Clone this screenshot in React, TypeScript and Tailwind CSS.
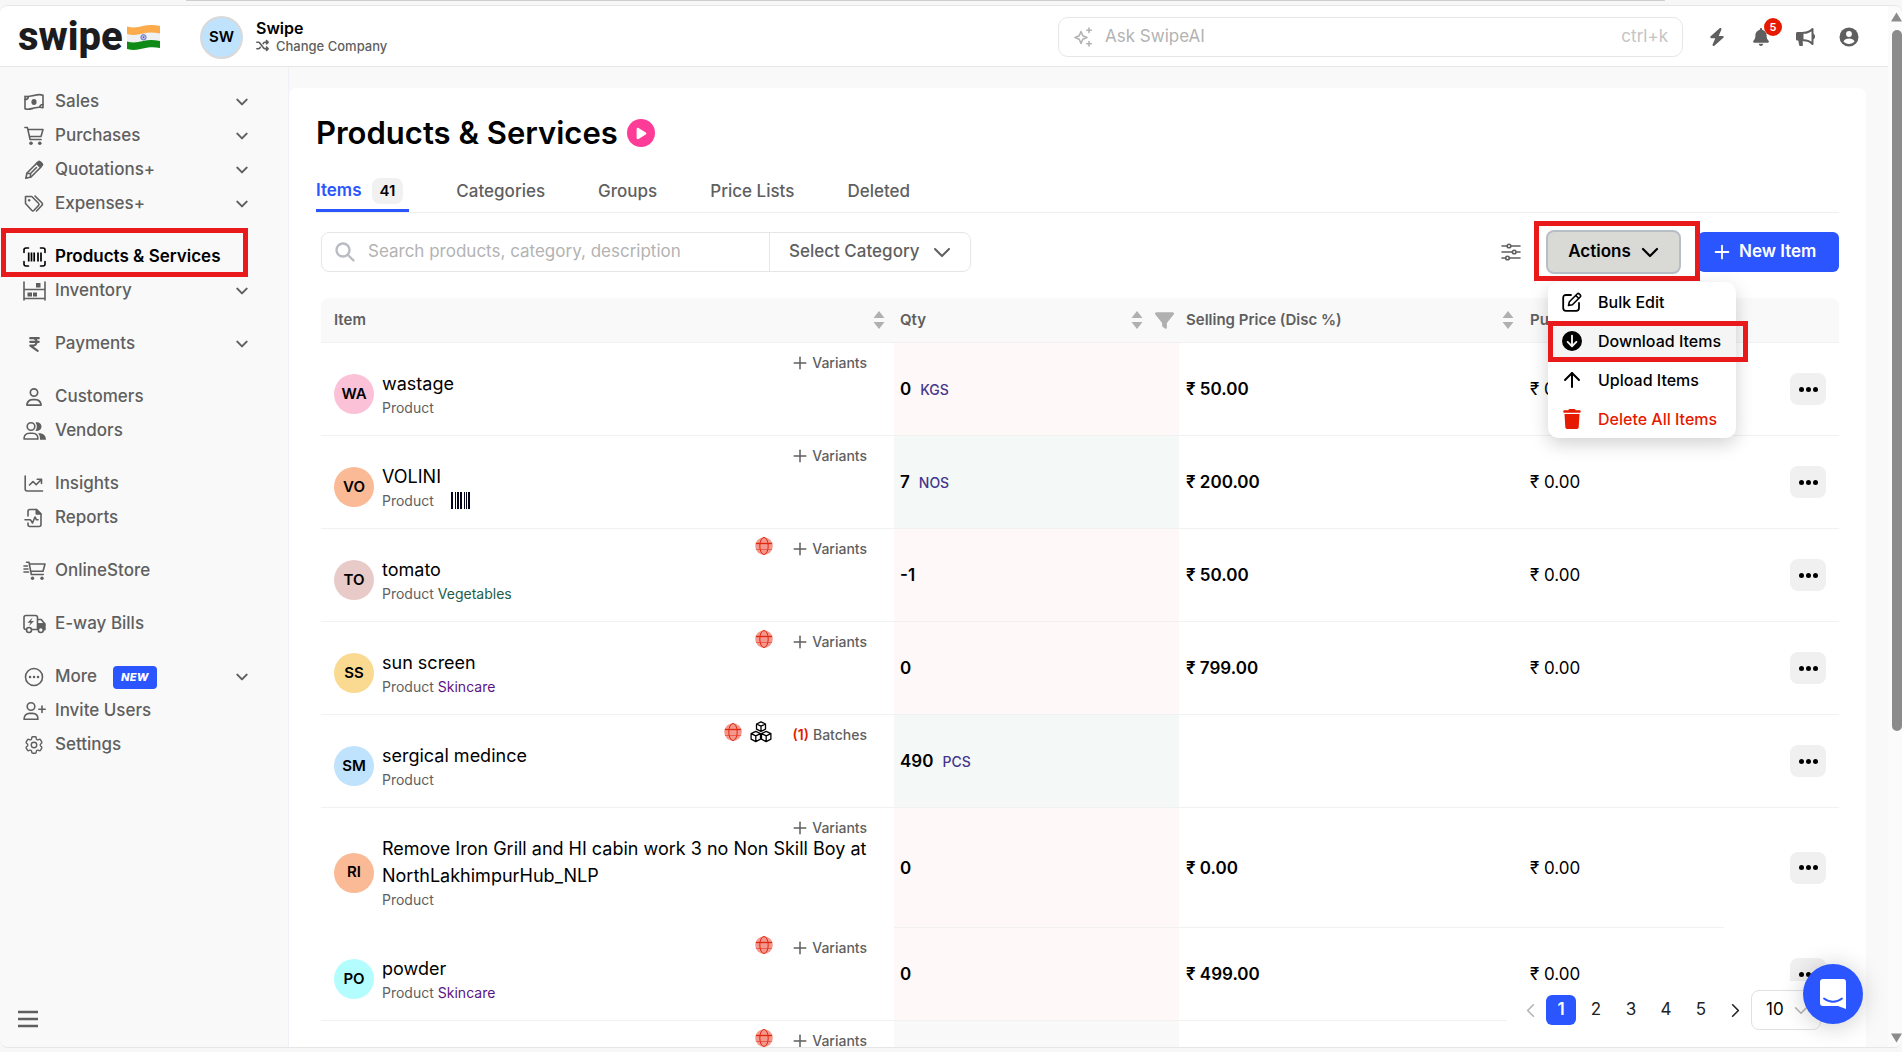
import React from "react";
import clsx from "clsx";
import { FaBolt, FaBell, FaFilter, FaTrash, FaRegUser, FaIndianRupeeSign, FaCircleArrowDown, FaPlay, FaShuffle } from "react-icons/fa6";
import { HiOutlineCog6Tooth } from "react-icons/hi2";
import { ArrowUp, Plus } from "lucide-react";

type IconProps = { className?: string };

const Svg = ({ children, className, w = 20 }: { children: React.ReactNode; className?: string; w?: number }) => (
  <svg
    viewBox={`0 0 ${w} 20`}
    className={className ?? "h-5 w-auto"}
    fill="none"
    stroke="currentColor"
    strokeWidth="1.6"
    strokeLinecap="round"
    strokeLinejoin="round"
    aria-hidden="true"
  >
    {children}
  </svg>
);

const CashIcon = () => (
  <Svg>
    <path d="M1 4.2c3 1.2 6-.1 9-.8 3-.8 6-1.4 9-.2v12.6c-3-1.2-6-.5-9 .3s-6 1.900-9 .7z" />
    <path d="M1 7.500c2 0 3.200-1.200 3.200-2.600M19 12.500c-2 0-3.200 1.200-3.200 2.800" />
    <ellipse cx="10" cy="10" rx="2.600" ry="3" fill="currentColor" stroke="none" />
  </Svg>
);
const CartIcon = () => (
  <Svg>
    <path d="M.9 1.500h2.500l2.700 12h11M4 3.500h15l-2 7H5.600" />
    <circle cx="7" cy="17.200" r="1.800" fill="currentColor" stroke="none" />
    <circle cx="15.800" cy="17.200" r="1.800" fill="currentColor" stroke="none" />
  </Svg>
);
const PencilIcon = () => (
  <Svg>
    <path d="M1.800 18.200l1.200-5.200L13 3l4 4L7 17z" />
    <path d="M12.500 3.500l2-2c1-1 4.800 2.500 3.800 3.800l-2 2z" fill="currentColor" />
    <path d="M6.500 13.500l6-6M3 13.500l3.500 0v3.500" />
  </Svg>
);
const TagsIcon = () => (
  <Svg>
    <path d="M1.500 2.500h6.300L14.500 9.200c.8.800.8 1.500 0 2.300l-4.500 4.800c-.8.800-1.500.8-2.300 0L1.500 9.500z" />
    <path d="M11 2l6.800 6.800c.9.900.9 1.800 0 2.700L12.500 17" />
    <circle cx="5.200" cy="6.200" r="1.200" fill="currentColor" stroke="none" />
  </Svg>
);
const BarcodeIcon = () => (
  <Svg w={23}>
    <path d="M1 5.500V3c0-1.200.8-2 2-2h2.500M17.500 1H20c1.200 0 2 .8 2 2v2.500M22 14.500V17c0 1.200-.8 2-2 2h-2.500M5.500 19H3c-1.200 0-2-.8-2-2v-2.500" />
    <path d="M5.700 5.500v9M8.500 5.500v9M11.200 5.500v9M15 5.500v9M18 5.500v9" strokeWidth="1.700" strokeLinecap="butt" />
  </Svg>
);
const InventoryIcon = () => (
  <Svg w={23}>
    <path d="M1 1v18M22 1v18M1 8.500h21M1 17.500h21" />
    <path d="M13 2h4.500v4.500H13zM4.500 11.500H9v4H4.500zM10 11.500h4v4h-4z" fill="currentColor" stroke="none" />
  </Svg>
);
const UsersIcon = () => (
  <Svg w={23}>
    <circle cx="8" cy="5.500" r="3.800" />
    <path d="M1 18c0-4 2.500-5.800 5.500-5.800h3c3 0 5.500 1.800 5.500 5.800z" />
    <path d="M12.500 9.800c1.800-2.600 1.800-5.800 0-8.300 3-1 6 1 6 4.100s-3 5.200-6 4.200zM15 12.300c5-.5 8 2.200 8 6.500h-6c.2-3-.4-5-2-6.500z" fill="currentColor" stroke="none" />
  </Svg>
);
const InsightsIcon = () => (
  <Svg>
    <path d="M1.200 2v13c0 1.200.8 2 2 2H18.500M5.500 11l3.500-3.500 3.200 3.200L17 5.800M13.200 5.200h4.300v4.300" />
  </Svg>
);
const ReportsIcon = () => (
  <Svg>
    <path d="M4 8V3.500c0-1.200.8-2 2-2h6.500L17 6v10.500c0 1.200-.8 2-2 2H6c-1.200 0-2-.8-2-2V15" />
    <path d="M12.300 1.500V6H17z" fill="currentColor" />
    <path d="M1 11.800h5.500l2 3.200 2.500-6 1.500 2.800H14" />
  </Svg>
);
const StoreIcon = () => (
  <Svg w={23}>
    <path d="M3.500 1.200H6l2.300 12.300h12M6.500 3H22l-2 7.200H8" />
    <path d="M1 5h3.500M1 8h4M1 11h4.500" />
    <circle cx="9.500" cy="17.300" r="1.700" fill="currentColor" stroke="none" />
    <circle cx="19" cy="17.300" r="1.700" fill="currentColor" stroke="none" />
  </Svg>
);
const TruckIcon = () => (
  <Svg w={23}>
    <path d="M3.500 15.500H3c-1.200 0-2-.8-2-2V3.500c0-1.200.8-2 2-2h9.500c1.200 0 2 .8 2 2v12H9" />
    <path d="M15 5.500h3.200L21.500 9.500v6.200M15 10h7" />
    <path d="M15 10h6.800v5.500H15z" fill="currentColor" />
    <circle cx="6" cy="16" r="2.500" fill="#f9f9f9" />
    <circle cx="17.800" cy="16" r="2.500" fill="#f9f9f9" />
    <path d="M9.500 3.500L4.500 8.700h3L6 12l5-5H8z" fill="currentColor" stroke="none" />
  </Svg>
);
const MoreIcon = () => (
  <Svg>
    <circle cx="10" cy="10" r="8.500" />
    <path d="M6 10h.1M10 10h.1M14 10h.1" strokeWidth="2.400" />
  </Svg>
);
const InviteIcon = () => (
  <Svg w={23}>
    <circle cx="8" cy="5.500" r="3.800" />
    <path d="M1 18.200c0-4 2.500-5.800 5.500-5.800h3c3 0 5.500 1.800 5.500 5.800zM19 5v6.500M15.800 8.200h6.400" />
  </Svg>
);
const MegaphoneIcon = ({ className }: IconProps) => (
  <Svg className={className}>
    <path d="M1 6.500C1 5.500 1.700 5 2.500 5h6v8.500H7.800V19H4.500c-.6-1.800-1-3.700-1.200-5.500H2.500C1.700 13.500 1 13 1 12z" fill="currentColor" stroke="none" />
    <path d="M8.500 5.800c4 0 6.800-1.300 9-3.800v15c-2.200-2.500-5-3.800-9-3.800" strokeWidth="2" />
    <path d="M18 7.500a2.200 2.200 0 0 1 0 4z" fill="currentColor" />
  </Svg>
);
const AccountIcon = ({ className }: IconProps) => (
  <svg viewBox="0 0 20 20" className={className} aria-hidden="true">
    <circle cx="10" cy="10" r="9.500" fill="currentColor" />
    <circle cx="10" cy="7" r="2.900" fill="#fff" />
    <path d="M4.500 14.500c1-2.300 3-3 5.500-3s4.500.7 5.500 3c-1.400 1.600-3.300 2.500-5.500 2.500s-4.100-.9-5.500-2.500z" fill="#fff" />
  </svg>
);
const SparkleIcon = ({ className }: IconProps) => (
  <Svg className={className}>
    <path d="M8 4.500L9.800 8.700 14 10.500 9.800 12.300 8 16.500 6.200 12.300 2 10.500 6.200 8.700z" />
    <path d="M16 1v4.500M13.800 3.200h4.500M16 14.500V19M13.800 16.800h4.500" />
  </Svg>
);
const SlidersIcon = () => (
  <Svg className="h-5 w-5">
    <path d="M1 4h5M10 4h9M1 10h10M15.500 10H19M1 16h3.500M8.500 16H19" />
    <circle cx="8" cy="4" r="1.800" />
    <circle cx="13.200" cy="10" r="1.800" />
    <circle cx="6.500" cy="16" r="1.800" />
  </Svg>
);
const EditIcon = () => (
  <Svg className="h-5 w-5">
    <path d="M9 3H4C2.300 3 1.200 4 1.200 5.700V16c0 1.700 1.100 2.800 2.800 2.800h10.200c1.700 0 2.800-1.100 2.800-2.800v-5" strokeWidth="1.800" />
    <path d="M6.500 13.500l.9-3.800 8-8c1-1 4.200 1.800 3 3l-8 8zM13.800 3.500l3 3" strokeWidth="1.600" />
  </Svg>
);
const GlobeIcon = () => (
  <svg viewBox="0 0 18 18" className="size-[18px]" fill="none" stroke="#e0280c" strokeWidth="1" aria-hidden="true">
    <circle cx="9" cy="9" r="8.800" fill="#f4988f" stroke="none" />
    <ellipse cx="9" cy="9" rx="4.200" ry="8.500" />
    <path d="M1 6.500h16" strokeWidth="1.300" />
    <path d="M1 12.500h16" strokeOpacity=".5" />
  </svg>
);
const CubesIcon = () => (
  <svg viewBox="0 0 22 22" className="size-[22px]" fill="none" stroke="#000" strokeWidth="1.300" strokeLinejoin="round" aria-hidden="true">
    <path d="M11 .8l4.500 2.200v5.200L11 10.400l-4.500-2.200V3zM6.500 3L11 5.200 15.500 3M11 5.200v5.200" />
    <path d="M5.800 10.400l4.700 2.200v5.600l-4.700 2.400-4.700-2.400v-5.600zM1.100 12.600l4.700 2.200 4.700-2.200M5.800 14.800v5.800" />
    <path d="M16.200 10.400l4.700 2.200v5.600l-4.700 2.400-4.700-2.400v-5.600zM11.500 12.600l4.700 2.200 4.700-2.200M16.200 14.800v5.800" />
  </svg>
);
const ItemBarcode = () => (
  <svg viewBox="0 0 19 16" className="h-[17px] w-[19px]" preserveAspectRatio="none" aria-hidden="true">
    <path d="M0 0h2v16H0zM4 0h1v16H4zM6 0h2v16H6zM9 0h2v16H9zM13 0h1v16h-1zM15 0h1v16h-1zM17 0h2v16h-2z" fill="#04041c" />
  </svg>
);
const ChevronIcon = ({ className, strokeWidth = 2 }: IconProps & { strokeWidth?: number }) => (
  <svg viewBox="0 0 18 11" className={className} fill="none" stroke="currentColor" strokeWidth={strokeWidth} strokeLinecap="round" strokeLinejoin="round" aria-hidden="true">
    <path d="M2 2l7 7 7-7" />
  </svg>
);
const IndiaFlag = () => (
  <svg viewBox="0 0 33 25" className="h-[25px] w-[33px] shrink-0" aria-hidden="true">
    <path d="M0 1.500C6 3 10 2.500 16 1s11-1.200 17 0v8c-6-1.200-11-1-17 0.500S6 11 0 9.500z" fill="#fbab4a" />
    <path d="M0 9c6 1.500 10 1 16-.5s11-1.200 17 0v7.500c-6-1.200-11-1-17 .5s-10 2-16 .5z" fill="#eef0f2" />
    <path d="M0 16.500c6 1.500 10 1 16-.5s11-1.200 17 0v7c-6-1.200-11-1-17 .5s-10 2-16 .5z" fill="#0f8a16" />
    <circle cx="16.500" cy="12.300" r="2.700" fill="#b9bde6" stroke="#5560c0" strokeWidth=".8" />
    <circle cx="16.500" cy="12.300" r=".8" fill="#3c49b4" />
  </svg>
);

interface NavItem {
  label: string;
  icon: React.ReactNode;
  more?: boolean;
  badge?: string;
  active?: boolean;
}

const navGroups: NavItem[][] = [
  [
    { label: "Sales", icon: <CashIcon />, more: true },
    { label: "Purchases", icon: <CartIcon />, more: true },
    { label: "Quotations+", icon: <PencilIcon />, more: true },
    { label: "Expenses+", icon: <TagsIcon />, more: true },
  ],
  [
    { label: "Products & Services", icon: <BarcodeIcon />, active: true },
    { label: "Inventory", icon: <InventoryIcon />, more: true },
  ],
  [{ label: "Payments", icon: <FaIndianRupeeSign size={17} />, more: true }],
  [
    { label: "Customers", icon: <FaRegUser size={18} /> },
    { label: "Vendors", icon: <UsersIcon /> },
  ],
  [
    { label: "Insights", icon: <InsightsIcon /> },
    { label: "Reports", icon: <ReportsIcon /> },
  ],
  [{ label: "OnlineStore", icon: <StoreIcon /> }],
  [{ label: "E-way Bills", icon: <TruckIcon /> }],
  [
    { label: "More", icon: <MoreIcon />, more: true, badge: "NEW" },
    { label: "Invite Users", icon: <InviteIcon /> },
    { label: "Settings", icon: <HiOutlineCog6Tooth size={22} /> },
  ],
];

interface Product {
  id: number;
  initials?: string;
  color?: string;
  name?: string;
  category?: string;
  categoryColor?: string;
  barcode?: boolean;
  online?: boolean;
  batches?: number;
  qty?: string;
  unit?: string;
  qtyColor: string;
  price?: string;
  purchase?: string;
  openEnd?: boolean;
}

const products: Product[] = [
  { id: 1, initials: "WA", color: "bg-[#fbc2d7]", name: "wastage", qty: "0", unit: "KGS", qtyColor: "bg-[#fef8f8]", price: "50.00", purchase: "0.00" },
  { id: 2, initials: "VO", color: "bg-[#fbba96]", name: "VOLINI", barcode: true, qty: "7", unit: "NOS", qtyColor: "bg-[#f4f9f8]", price: "200.00", purchase: "0.00" },
  { id: 3, initials: "TO", color: "bg-[#e8cbc8]", name: "tomato", category: "Vegetables", categoryColor: "text-[#1d5c46]", online: true, qty: "-1", qtyColor: "bg-[#fef8f8]", price: "50.00", purchase: "0.00" },
  { id: 4, initials: "SS", color: "bg-[#fad991]", name: "sun screen", category: "Skincare", categoryColor: "text-[#5b1382]", online: true, qty: "0", qtyColor: "bg-[#fef8f8]", price: "799.00", purchase: "0.00" },
  { id: 5, initials: "SM", color: "bg-[#bfe2fd]", name: "sergical medince", online: true, batches: 1, qty: "490", unit: "PCS", qtyColor: "bg-[#f4f9f8]" },
  { id: 6, initials: "RI", color: "bg-[#fbba96]", name: "Remove Iron Grill and HI cabin work 3 no Non Skill Boy at NorthLakhimpurHub_NLP", qty: "0", qtyColor: "bg-[#fef8f8]", price: "0.00", purchase: "0.00", openEnd: true },
  { id: 7, initials: "PO", color: "bg-[#b3fdfe]", name: "powder", category: "Skincare", categoryColor: "text-[#5b1382]", online: true, qty: "0", qtyColor: "bg-[#fef8f8]", price: "499.00", purchase: "0.00" },
  { id: 8, online: true, qtyColor: "bg-[#f9f9f9]" },
];

const SortIcon = () => (
  <svg viewBox="0 0 12 18" className="h-[18px] w-3" fill="#b0b0b0" aria-hidden="true">
    <path d="M6 0l5.500 7H.5zM6 18l5.500-7H.5z" />
  </svg>
);

const Header = () => (
  <header className="flex h-[61px] shrink-0 items-center border-b border-[#e6e6e6] bg-white pt-0.5 pr-[29px] pl-[18px]">
    <a href="#" className="flex w-[182px] items-center gap-[7px]">
      <span className="w-[102px] font-[Roboto] text-[40px] leading-9 font-extrabold text-[#1c1c1e]">swipe</span>
      <IndiaFlag />
    </a>
    <div className="flex flex-1 items-center gap-[13px]">
      <span className="flex size-[43px] items-center justify-center rounded-full border-2 border-[#d9d9d9] bg-[#bfe2fd] text-[15px] font-semibold">SW</span>
      <div className="pb-[3px]">
        <p className="text-base leading-5 font-semibold">Swipe</p>
        <button className="flex items-center gap-[7px] text-[13px] leading-4 font-medium text-[#5f5f5f]">
          <FaShuffle size={13} />
          Change Company
        </button>
      </div>
    </div>
    <label className="flex h-10 w-[625px] items-center gap-3 rounded-[10px] border border-[#e6e6e6] px-[14px] text-[#b3b3b3]">
      <SparkleIcon className="h-5 w-5" />
      <input type="text" aria-label="Ask SwipeAI" placeholder="Ask SwipeAI" className="min-w-0 flex-1 text-[17px] outline-none placeholder:text-[#b3b3b3]" />
      <span className="text-[17px] text-[#c4c4c4]">ctrl+k</span>
    </label>
    <div className="ml-6 flex items-center gap-6 text-[#5f5f5f]">
      <button aria-label="Quick actions" className="flex w-5 justify-center"><FaBolt size={18} /></button>
      <button aria-label="Notifications" className="relative flex w-5 justify-center">
        <FaBell size={18} />
        <span className="absolute -top-[10px] left-[13px] flex size-[18px] items-center justify-center rounded-full bg-[#e51a00] text-[11px] font-semibold text-white">5</span>
      </button>
      <button aria-label="Announcements"><MegaphoneIcon className="h-5 w-5" /></button>
      <button aria-label="Account"><AccountIcon className="h-5 w-5" /></button>
    </div>
  </header>
);

const Sidebar = () => (
  <nav className="flex w-[289px] shrink-0 flex-col justify-between border-r border-[#f0f0f6] pt-[18px] pb-[19px]">
    <div className="flex flex-col gap-[19px]">
      {navGroups.map((group) => (
        <ul key={group[0].label}>
          {group.map((item) => (
            <li key={item.label} className="relative">
              <a href="#" className={clsx("flex h-[34px] items-center pr-10 pl-[22px] text-[17px]", item.active ? "font-semibold text-black" : "font-medium text-[#5f5f5f]")}>
                <span className="mr-[9px] flex w-6 justify-center">{item.icon}</span>
                {item.label}
                {item.badge && <span className="ml-4 rounded-[4px] bg-[#2a55ff] px-2 text-[11px] leading-[23px] font-extrabold tracking-wide text-white italic">{item.badge}</span>}
                {item.more && <ChevronIcon className="ml-auto h-2 w-3" strokeWidth={3} />}
              </a>
              {item.active && <span className="pointer-events-none absolute -top-3 left-px h-[49px] w-[247px] border-5 border-[#e81a1c]" />}
            </li>
          ))}
        </ul>
      ))}
    </div>
    <button aria-label="Collapse menu" className="ml-[18px] w-5 text-[#5f5f5f]">
      <svg viewBox="0 0 20 18" className="h-[18px] w-5" fill="none" stroke="currentColor" strokeWidth="2.400" aria-hidden="true">
        <path d="M0 2h20M0 9h20M0 16h20" />
      </svg>
    </button>
  </nav>
);

const ActionsMenu = () => (
  <div className="absolute top-[52px] left-0.5 z-20 w-[188px] rounded-[10px] bg-white text-base font-medium shadow-[0_6px_18px_rgba(0,0,0,0.18)]">
    <button className="flex h-[39px] w-full items-center gap-4 pl-[14px]"><EditIcon />Bulk Edit</button>
    <div className="relative">
      <button className="flex h-[39px] w-full items-center gap-4 bg-[#f5f5f5] pl-[14px]"><FaCircleArrowDown size={20} />Download Items</button>
      <span className="pointer-events-none absolute top-0 left-0 h-[41px] w-[200px] border-5 border-[#e81a1c]" />
    </div>
    <button className="flex h-[39px] w-full items-center gap-4 pl-[14px]"><span className="flex w-5 justify-center"><ArrowUp size={24} className="shrink-0" /></span>Upload Items</button>
    <button className="flex h-[39px] w-full items-center gap-4 pl-[14px] text-[#e51a00]"><span className="flex w-5 justify-center"><FaTrash size={20} /></span>Delete All Items</button>
  </div>
);

const Toolbar = () => (
  <div className="mt-[19px] flex items-center justify-between pl-[5px]">
    <div className="flex h-10 w-[650px] items-center rounded-lg border border-[#e6e6e6] text-[17px]">
      <label className="flex h-full flex-1 items-center gap-[13px] border-r border-[#e6e6e6] pl-[13px]">
        <svg viewBox="0 0 20 20" className="h-5 w-5" fill="none" stroke="#b9bcc2" strokeWidth="2.400" strokeLinecap="round" aria-hidden="true">
          <circle cx="8" cy="8" r="6.500" />
          <path d="M13 13l5.500 5.500" />
        </svg>
        <input type="search" aria-label="Search" placeholder="Search products, category, description" className="min-w-0 flex-1 outline-none placeholder:text-[#b3b3b3]" />
      </label>
      <div className="relative flex h-full w-[200px] items-center">
        <select aria-label="Select Category" className="h-full w-full appearance-none pl-[19px] font-medium text-[#5f5f5f] outline-none">
          <option>Select Category</option>
        </select>
        <ChevronIcon className="pointer-events-none absolute right-[19px] h-[11px] w-[18px] text-[#5f5f5f]" />
      </div>
    </div>
    <div className="flex items-center">
      <button aria-label="Columns" className="mr-[25px] text-[#5f5f5f]"><SlidersIcon /></button>
      <div className="relative -my-1 mr-[17px]">
        <button className="flex h-11 w-[135px] items-center justify-center gap-[10px] rounded-lg border-2 border-[#b8bec6] bg-[#d9d9d6] text-[17px] font-semibold">
          Actions
          <ChevronIcon className="h-[11px] w-[18px]" strokeWidth={2.2} />
        </button>
        <span className="pointer-events-none absolute -top-[9px] -left-3 z-10 h-[60px] w-[166px] border-5 border-[#e81a1c]" />
        <ActionsMenu />
      </div>
      <button className="flex h-10 w-[141px] items-center gap-1.5 rounded-md bg-[#2a55ff] pl-[13px] text-[17px] font-semibold text-white">
        <Plus size={22} />
        New Item
      </button>
    </div>
  </div>
);

const ProductRow = ({ item }: { item: Product }) => {
  const line = "border-[#f1f1f1]";
  const openLine = item.openEnd ? "border-white" : line;
  return (
    <tr className="text-[17px] [&>td]:border-b">
      <td className={clsx("pt-3 pr-[27px] pb-[17px] pl-[13px]", openLine)}>
        <div className="flex h-[15px] items-center justify-end text-sm font-medium text-[#5f5f5f]">
          {item.online && <span className="mb-1.5 flex items-center gap-2"><GlobeIcon />{item.batches && <CubesIcon />}</span>}
          <button className={clsx("flex items-center", item.batches ? "ml-[21px] gap-1" : "ml-[17px] gap-0.5")}>
            {item.batches ? <span className="font-semibold text-[#e51a00]">({item.batches})</span> : <Plus size={20} strokeWidth={1.8} />}
            <span>{item.batches ? "Batches" : "Variants"}</span>
          </button>
        </div>
        {item.name && (
          <div className="flex items-center gap-2">
            <span className={clsx("flex size-10 shrink-0 items-center justify-center rounded-full text-[15px] font-semibold", item.color)}>{item.initials}</span>
            <div>
              <p className="text-lg leading-[27px]">{item.name}</p>
              <p className="flex items-center gap-1 text-sm leading-[21px] text-[#5f5f5f]">
                Product
                {item.category && <span className={item.categoryColor}>{item.category}</span>}
                {item.barcode && <span className="ml-[13px]"><ItemBarcode /></span>}
              </p>
            </div>
          </div>
        )}
      </td>
      <td className={clsx("pt-0.5 pl-1.5 font-semibold", line, item.qtyColor)}>
        {item.qty}
        {item.unit && <span className="ml-[9px] text-sm font-medium text-[#46358c]">{item.unit}</span>}
      </td>
      <td className={clsx("pt-0.5 pl-[7px] font-semibold", line)}>{item.price && `₹ ${item.price}`}</td>
      <td className={clsx("pt-0.5 pl-2", line)}>{item.purchase && `₹ ${item.purchase}`}</td>
      <td className={clsx("pr-[13px]", openLine)}>
        {item.name && (
          <button aria-label={`Options for ${item.name}`} className="ml-auto flex h-8 w-9 items-center justify-center gap-0.5 rounded-lg bg-[#f0f0f0]">
            <span className="size-[5px] rounded-full bg-black" />
            <span className="size-[5px] rounded-full bg-black" />
            <span className="size-[5px] rounded-full bg-black" />
          </button>
        )}
      </td>
    </tr>
  );
};

const ProductTable = () => (
  <table className="mt-[26px] ml-[5px] w-[calc(100%-5px)] table-fixed border-separate border-spacing-0">
    <thead>
      <tr className="h-[45px] bg-[#f9f9f9] text-left text-[15px] text-[#5f5f5f] [&>th]:border-b [&>th]:border-[#f1f1f1] [&>th]:font-semibold">
        <th className="rounded-tl-lg pr-[9px] pl-[13px]"><div className="flex items-center justify-between">Item<SortIcon /></div></th>
        <th className="w-[285px] pr-[5px] pl-1.5">
          <div className="flex items-center">
            <span className="flex-1">Qty</span>
            <SortIcon />
            <FaFilter size={19} className="ml-3 text-[#b0b0b0]" />
          </div>
        </th>
        <th className="w-[343px] pr-2 pl-[7px]"><div className="flex items-center justify-between">Selling Price (Disc %)<SortIcon /></div></th>
        <th className="w-[202px] pl-2">Purchase Price</th>
        <th className="w-[115px] rounded-tr-lg" aria-label="Options" />
      </tr>
    </thead>
    <tbody>
      {products.map((item) => (
        <ProductRow key={item.id} item={item} />
      ))}
    </tbody>
  </table>
);

const Pagination = () => (
  <div className="absolute right-0 bottom-0 flex h-[66px] w-[359px] items-start bg-white pt-[9px] pl-4 text-[17px]">
    <button aria-label="Previous page" className="flex h-10 w-[23px] items-center text-[#b3b3b3]"><ChevronIcon className="h-[9px] w-[15px] rotate-90" /></button>
    <div className="flex h-10 items-center gap-[5px]">
      {[1, 2, 3, 4, 5].map((page) => (
        <button key={page} className={clsx("size-[30px] rounded-md", page === 1 ? "bg-[#2a55ff] font-semibold text-white" : "text-[#222]")}>
          {page}
        </button>
      ))}
    </div>
    <button aria-label="Next page" className="flex h-10 w-[35px] items-center justify-end pr-2 text-[#222]"><ChevronIcon className="h-[9px] w-[15px] -rotate-90" /></button>
    <div className="relative flex h-10 w-[70px] items-center">
      <select aria-label="Rows per page" className="h-full w-full appearance-none rounded-lg border border-[#e0e0e0] pl-[14px] outline-none">
        <option>10</option>
      </select>
      <ChevronIcon className="pointer-events-none absolute right-[13px] h-[9px] w-[14px] text-[#b3b3b3]" />
    </div>
  </div>
);

const tabs = ["Items", "Categories", "Groups", "Price Lists", "Deleted"];

const App = () => {
  return (
    <div className="flex h-screen flex-col bg-[#f7f7f7] pb-1 font-[Inter,sans-serif] text-black">
      <div className="mr-[237px] ml-[186px] h-[5px] shrink-0">
        <div className="h-px rounded-full bg-[#cfcfcf]" />
      </div>
      <div className="flex min-h-0 flex-1 overflow-hidden rounded-lg border-y border-[#e6e6e6] bg-[#f9f9f9]">
        <div className="flex min-w-0 flex-1 flex-col">
          <Header />
          <div className="flex min-h-0 flex-1">
            <Sidebar />
            <main className="relative mt-[21px] mr-[22px] min-w-0 flex-1 rounded-t-lg bg-white">
              <div className="h-full overflow-hidden px-[27px] pt-[25px]">
                <div className="flex items-center gap-[9px]">
                  <h1 className="text-[31px] leading-10 font-semibold">Products & Services</h1>
                  <button aria-label="Watch tutorial" className="flex size-7 items-center justify-center rounded-full bg-[#ff3b98] pl-0.5 text-white">
                    <FaPlay size={13} />
                  </button>
                </div>
                <div className="mt-[19px] flex gap-[53px] border-b border-[#efefef] text-[17px] font-medium text-[#5f5f5f]">
                  {tabs.map((tab, i) => (
                    <button
                      key={tab}
                      className={clsx("flex h-10 items-center", i === 0 && "-mr-1.5 -mb-px gap-[10px] border-b-3 border-[#2a55ff] pr-1.5 font-semibold text-[#2a55ff]")}
                    >
                      {tab}
                      {i === 0 && <span className="rounded-lg bg-[#f1f1f1] px-2 text-[15px] leading-[26px] text-black">41</span>}
                    </button>
                  ))}
                </div>
                <Toolbar />
                <ProductTable />
              </div>
              <Pagination />
              <button aria-label="Open chat" className="absolute right-[3px] bottom-[23px] flex size-[60px] items-center justify-center rounded-full bg-[#2a55ff] shadow-[0_2px_24px_rgba(0,0,0,0.2)]">
                <svg viewBox="0 0 28 32" className="h-8 w-7" aria-hidden="true">
                  <path d="M4 1h20a3 3 0 0 1 3 3v27l-8-3H4a3 3 0 0 1-3-3V4a3 3 0 0 1 3-3z" fill="#fff" />
                  <path d="M5 20.500c5.500 4.300 12.500 4.300 18 0" fill="none" stroke="#2a55ff" strokeWidth="1.800" strokeLinecap="round" />
                </svg>
              </button>
            </main>
          </div>
        </div>
        <div className="flex w-[14px] shrink-0 flex-col items-end bg-[#fbfbfb] pt-1.5 pb-1" aria-hidden="true">
          <svg viewBox="0 0 12 10" className="h-[10px] w-[11px]" fill="#8b8b8b"><path d="M6 0l6 10H0z" /></svg>
          <div className="mt-2 h-[701px] w-[10px] rounded-full bg-[#8b8b8b]" />
          <svg viewBox="0 0 12 10" className="mt-auto h-[10px] w-[11px]" fill="#8b8b8b"><path d="M6 10l6-10H0z" /></svg>
        </div>
      </div>
    </div>
  );
};

export default App;
